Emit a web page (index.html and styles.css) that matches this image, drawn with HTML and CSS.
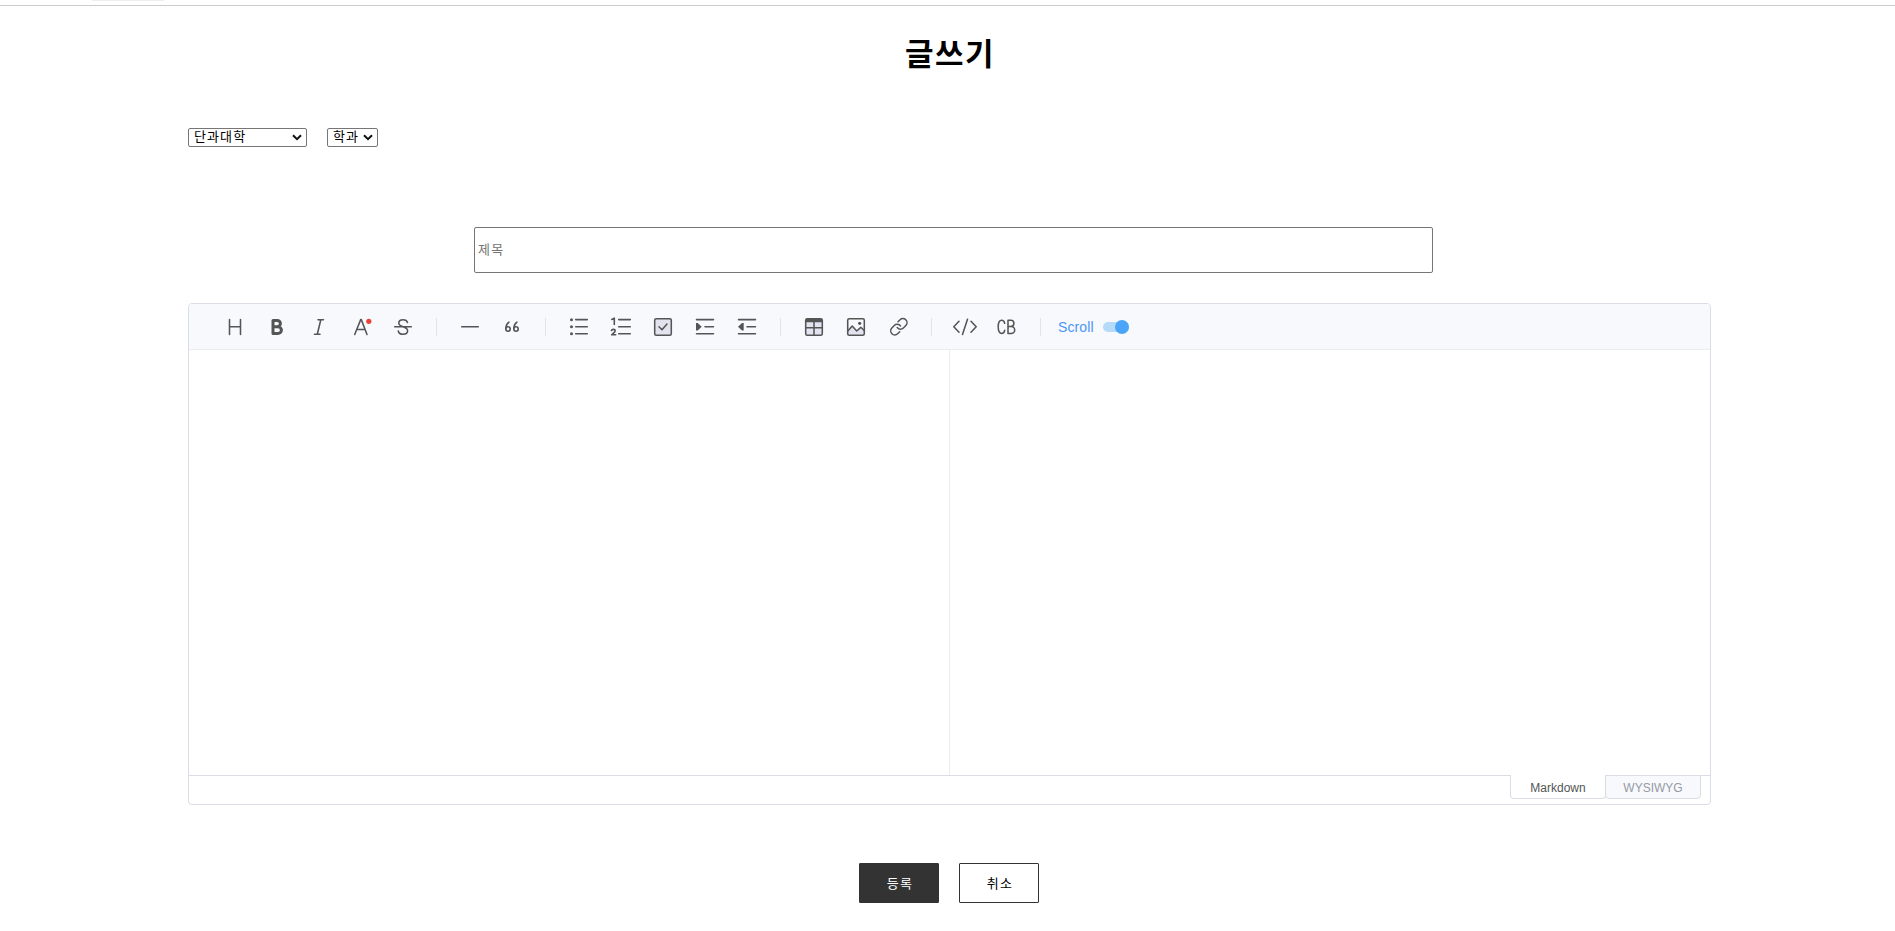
FILE: index.html
```html
<!DOCTYPE html>
<html lang="ko">
<head>
<meta charset="utf-8">
<title>글쓰기</title>
<link rel="stylesheet" href="styles.css">
</head>
<body>
<header class="topbar"><span class="topbar-tab"></span></header>
<main class="write">
  <h1 class="title">글쓰기</h1>
  <div class="filters">
    <div class="select college">단과대학<svg class="caret" viewBox="0 0 10 7"><path d="M1 1.2 5 5.2 9 1.2"/></svg></div>
    <div class="select dept">학과<svg class="caret" viewBox="0 0 10 7"><path d="M1 1.2 5 5.2 9 1.2"/></svg></div>
  </div>
  <input class="subject" type="text" placeholder="제목">
  <section class="editor">
    <div class="toolbar">
      <svg class="icon" viewBox="0 0 32 32"><path d="M10.500 8.500v15M21.500 8.500v15M10.500 15.700h11"/></svg>
      <svg class="icon" viewBox="0 0 32 32"><path class="bold" d="M12 9.500h4.300a3.100 3.100 0 0 1 0 6.200H12zM12 15.700h5a3.400 3.400 0 0 1 0 6.800h-5z"/></svg>
      <svg class="icon" viewBox="0 0 32 32"><path d="M15 8.700h5.500M11.500 23.300h5.500M17.800 8.700l-3.500 14.600"/></svg>
      <svg class="icon" viewBox="0 0 32 32"><path d="M9.700 23.500 15.700 8.600h.6L22 23.500M11.800 18.500h8.200"/><circle class="red" cx="23.800" cy="10.300" r="2.600"/></svg>
      <svg class="icon" viewBox="0 0 32 32"><path d="M20.500 11.500C20 9.600 18.300 8.700 16 8.700c-2.500 0-4.200 1.300-4.200 3.400 0 2.200 1.900 3 4.200 3.700 2.700.8 4.600 1.600 4.600 4 0 2.200-1.900 3.500-4.500 3.500-2.500 0-4.400-1.200-4.800-3.300M7.700 15.700h16.600"/></svg>
      <span class="sep"></span>
      <svg class="icon" viewBox="0 0 32 32"><path d="M7.700 15.700h16.600"/></svg>
      <svg class="icon" viewBox="0 0 32 32"><g class="quote"><circle cx="12" cy="18" r="2.200"/><path d="M9.800 17.500c.2-2.700 1.300-5 3.100-6.300"/><circle cx="20" cy="18" r="2.200"/><path d="M17.800 17.500c.2-2.700 1.300-5 3.100-6.300"/></g></svg>
      <span class="sep"></span>
      <svg class="icon" viewBox="0 0 32 32"><path d="M12.700 8.600h11.600M12.700 15.700h11.600M12.700 22.700h11.600"/><g class="fill"><circle cx="8.500" cy="8.700" r="1.500"/><circle cx="8.500" cy="15.700" r="1.500"/><circle cx="8.500" cy="22.700" r="1.500"/></g></svg>
      <svg class="icon" viewBox="0 0 32 32"><path d="M13.700 8.600h11.600M13.700 15.700h11.600M13.700 22.700h11.600"/><path class="num" d="M6.800 8.500 9.300 7.200V13.500M6.500 19.500c.3-1.600 3.700-1.600 3.700.3 0 1.300-2.200 2.500-3.500 4h4"/></svg>
      <svg class="icon" viewBox="0 0 32 32"><rect class="shade" x="7.700" y="7.700" width="16.600" height="16.600" rx="1.500"/><path d="m12 15.700 3 3 5-5.700"/></svg>
      <svg class="icon" viewBox="0 0 32 32"><path d="M7.500 8.600h17M16 15.700h8.500M7.500 22.700h17"/><path class="fill" d="M7 12h1.700l4 3.700-4 3.700H7z"/></svg>
      <svg class="icon" viewBox="0 0 32 32"><path d="M7.500 8.600h17M16 15.700h8.500M7.500 22.700h17"/><path class="fill" d="M12.700 12H11l-4 3.700 4 3.700h1.700z"/></svg>
      <span class="sep"></span>
      <svg class="icon" viewBox="0 0 32 32"><rect class="shade" x="7.700" y="7.700" width="16.600" height="16.600" rx="1.500"/><path class="fill" d="M8 8h16v3.300H8z"/><path d="M7.700 16.800h16.600M16 11v13"/></svg>
      <svg class="icon" viewBox="0 0 32 32"><path class="tint" d="M8 20l4.500-4.500 3.500 4 4.500-3.300L24 19v5H8z"/><rect x="7.700" y="7.700" width="16.600" height="16.600" rx="1.500"/><path d="m8 19.700 4.200-4.700 4.500 5 4.100-3.700 3.400 3.200"/><circle class="fill" cx="19.700" cy="12.300" r="1.600"/></svg>
      <svg class="icon" viewBox="0 0 32 32"><g class="chain" transform="translate(7 5.900) scale(.82)"><path d="M10 13a5 5 0 0 0 7.540.540l3-3a5 5 0 0 0-7.070-7.070l-2.500 2.500"/><path d="M14 11a5 5 0 0 0-7.540-.540l-3 3a5 5 0 0 0 7.070 7.070l2.500-2.500"/></g></svg>
      <span class="sep"></span>
      <svg class="icon" viewBox="0 0 32 32"><path d="M10 10.300 4.800 15.800l5.200 5.500M22 10.300l5.200 5.500-5.200 5.500M18.500 8.200l-5 15.300"/></svg>
      <svg class="icon" viewBox="0 0 32 32"><path d="M13.700 12.300c-.4-2-1.400-3.100-3-3.100-2.300 0-3.500 2.500-3.500 6.600s1.200 6.600 3.500 6.600c1.600 0 2.600-1.100 3-3.100M17 9.200h2.800a3.100 3.100 0 0 1 0 6.200H17zM17 15.400h3.200a3.500 3.500 0 0 1 0 7H17z"/></svg>
      <span class="sep"></span>
      <span class="scroll">Scroll</span><span class="switch"><span class="knob"></span></span>
    </div>
    <div class="panes"><div class="pane source"></div><div class="pane preview"></div></div>
    <div class="modes"><span class="mode-line"></span><span class="mode active">Markdown</span><span class="mode">WYSIWYG</span><span class="mode-end"></span></div>
  </section>
  <div class="actions"><button class="btn primary">등록</button><button class="btn">취소</button></div>
</main>
</body>
</html>
```
FILE: styles.css
```css
* { box-sizing: border-box; }
body { margin: 0; background: #fff; color: #000; font: 14px "Liberation Sans", "Noto Sans CJK KR", sans-serif; overflow: hidden; }
.topbar { height: 6px; padding-left: 92px; border-bottom: 1px solid #ccc; }
.topbar-tab { display: block; width: 72px; height: 1px; background: #eee; }
.write { width: 1523px; margin-left: 188px; }
.title { margin: 0; padding: 22px 0 0 1px; height: 122px; text-align: center; font: 700 31px/48px "Noto Sans CJK KR", sans-serif; letter-spacing: 1.500px; }
.filters { display: flex; gap: 20px; height: 99px; }
.select { display: flex; align-items: center; justify-content: space-between; height: 19px; padding: 0 4px 4px 5px; border: 1px solid #767676; border-radius: 2px; font: 13px/14px "Noto Sans CJK KR", sans-serif; letter-spacing: 1.100px; white-space: nowrap; }
.college { width: 119px; }
.dept { width: 51px; }
.caret { width: 10px; height: 7px; flex: none; margin-top: 4px; fill: none; stroke: #111; stroke-width: 2; }
.subject { display: block; width: 959px; height: 46px; margin: 0 0 30px 286px; padding: 0 3px 3px; border: 1px solid #767676; border-radius: 2px; font: 13px "Noto Sans CJK KR", sans-serif; letter-spacing: 1.200px; }
.subject::placeholder { color: #757575; }
.editor { height: 502px; border: 1px solid #dadde6; border-radius: 4px; display: flex; flex-direction: column; overflow: hidden; }
.toolbar { display: flex; align-items: center; height: 46px; padding-left: 25px; background: #f7f9fc; border-bottom: 1px solid #ebedf2; }
.icon { flex: none; width: 32px; height: 32px; margin: 0 5px; fill: none; stroke: #555; stroke-width: 1.550; stroke-linecap: round; stroke-linejoin: round; }
.icon .bold { stroke-width: 3; }
.icon .fill { fill: #555; stroke: none; }
.icon .red { fill: #ed4337; stroke: none; }
.icon .shade { fill: #e2e3ee; }
.icon .tint { fill: #e2e3ee; stroke: none; }
.icon .quote { stroke-width: 1.600; }
.icon .num { stroke-width: 1.600; }
.icon .chain { stroke-width: 1.850; }
.sep { flex: none; width: 1px; height: 18px; margin: 0 12px; background: #e1e3e9; }
.scroll { margin-left: 5px; width: 45px; color: #4b96f6; font-size: 14px; line-height: 20px; letter-spacing: 0.100px; }
.switch { display: flex; justify-content: flex-end; align-items: center; width: 26px; height: 10px; border-radius: 5px; background: #b5dbf8; }
.knob { width: 14px; height: 14px; border-radius: 50%; background: #4ba4f7; flex: none; }
.panes { display: flex; height: 425px; }
.pane { flex: 1; }
.source { flex: 0 0 761px; border-right: 1px solid #ebedf2; }
.modes { display: flex; height: 29px; font-size: 12px; }
.mode-line { flex: 1; height: 1px; background: #dadde6; }
.mode { width: 96px; height: 24px; border: 1px solid #dadde6; border-radius: 0 0 4px 4px; background: #f7f9fc; color: #969aa5; text-align: center; line-height: 24px; }
.mode.active { border-top: 0; background: #fff; color: #555; margin-right: -1px; line-height: 26px; }
.mode-end { width: 9px; height: 1px; background: #dadde6; }
.actions { display: flex; justify-content: center; gap: 20px; padding: 58px 0 0 0; margin-right: 1px; }
.btn { width: 80px; height: 40px; padding: 0 0 1px 2px; border: 1px solid #333; border-radius: 1px; background: #fff; color: #000; font: 13px "Noto Sans CJK KR", sans-serif; letter-spacing: 1.200px; }
.primary { background: #333; color: #fff; }
```
